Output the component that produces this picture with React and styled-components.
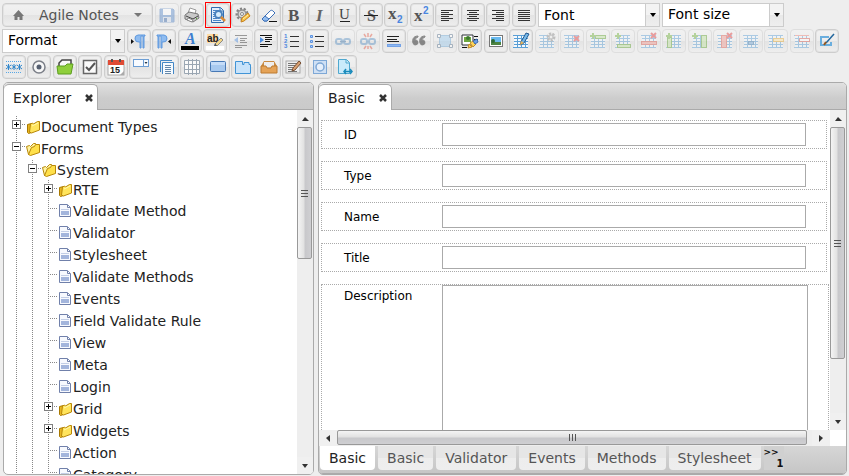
import React from "react";
import styled, { createGlobalStyle, css } from "styled-components";

const Global = createGlobalStyle`
  *, *::before, *::after { box-sizing: border-box; }
  html, body { margin: 0; height: 100%; }
  body {
    background: #eeeeee;
    color: #222222;
    font-family: "DejaVu Sans", Verdana, sans-serif;
    font-size: 14px;
    overflow: hidden;
  }
  button, input, select, textarea { font: inherit; color: inherit; }
  ul { margin: 0; padding: 0; list-style: none; }
`;

/* ---------- layout ---------- */

const Page = styled.div`
  height: 100vh;
  display: flex;
  flex-direction: column;
`;

const Toolbar = styled.header`
  display: flex;
  flex-direction: column;
  gap: 2px;
  padding: 3px 2px;
`;

const ToolRow = styled.div`
  display: flex;
  gap: 2px;
`;

const ToolGroup = styled.div`
  display: flex;
  gap: 1px;
  & > button:nth-child(even) { margin-right: 1px; }
`;

const buttonFace = css`
  border: 1px solid #cdcdcd;
  border-radius: 4px;
  box-shadow: inset 0 0 0 1px #e3e3e3;
  background: linear-gradient(#f1f1f1, #ededed 49%, #e3e3e3 50%, #eeeeee);
`;

const ToolButton = styled.button`
  ${buttonFace}
  position: relative;
  width: 24px;
  height: 24px;
  padding: 0;
  display: grid;
  place-items: center;
  ${(p) => p.$marked && css`
    &::after {
      content: "";
      position: absolute;
      inset: -2px;
      border: 1px solid #ff0000;
    }
  `}
  &:disabled { border-color: #dedede; box-shadow: none; }
  &:disabled svg { opacity: 0.45; }
`;

const MenuButton = styled.button`
  ${buttonFace}
  width: 151px;
  height: 24px;
  padding: 0 10px;
  display: flex;
  align-items: center;
  gap: 14px;
  color: #555555;
  svg:last-child { margin-left: auto; }
`;

const SelectBox = styled.div`
  display: grid;
  grid-template-columns: 1fr 14px;
  width: ${(p) => (p.$wide ? "123px" : "122px")};
  height: 24px;
  border: 1px solid #cccccc;
  background: #ffffff;
`;

const Select = styled.select`
  appearance: none;
  grid-area: 1 / 1 / 2 / 3;
  min-width: 0;
  border: 0;
  outline: 0;
  padding: 0 14px ${(p) => (p.$raised ? "3px" : "0")} 5px;
  background: transparent;
  color: #000000;
`;

const SelectArrow = styled.span`
  grid-area: 1 / 2 / 2 / 3;
  display: grid;
  place-items: center;
  border-left: 1px solid #cccccc;
  background: linear-gradient(#f3f3f3 49%, #e9e9e9 50%, #eeeeee);
  pointer-events: none;
`;

const Workspace = styled.main`
  flex: 1;
  min-height: 0;
  display: grid;
  grid-template-columns: minmax(0, 311fr) minmax(0, 529fr);
  gap: 4px;
  padding: 0 2px 1px 3px;
`;

const Panel = styled.section`
  display: flex;
  flex-direction: column;
  min-height: 0;
  border: 1px solid #aaaaaa;
  border-radius: 5px;
  background: #ffffff;
  overflow: hidden;
`;

const TabBar = styled.div`
  display: flex;
  align-items: flex-end;
  height: 27px;
  flex: none;
  border-bottom: 1px solid #aaaaaa;
  background: linear-gradient(#e0e0e0, #cccccc 60%, #cacaca);
`;

const PanelTab = styled.div`
  display: flex;
  align-items: center;
  gap: 13px;
  height: 26px;
  margin-bottom: -1px;
  padding: 0 4px 0 9px;
  border: 1px solid #aaaaaa;
  border-width: 1px 1px 0 0;
  border-radius: 5px 5px 0 0;
  background: #ffffff;
`;

const CloseButton = styled.button`
  display: grid;
  place-items: center;
  width: 9px;
  height: 16px;
  padding: 0;
  border: 0;
  background: none;
`;

/* ---------- explorer tree ---------- */

const TreeBody = styled.div`
  flex: 1;
  min-height: 0;
  display: flex;
`;

const TreeList = styled.ul`
  flex: 1;
  min-width: 0;
  padding: 6px 0 0 5px;
  overflow: hidden;
`;

const TreeRow = styled.li`
  display: flex;
  height: ${(p) => (p.$compact ? "20px" : "22px")};
  line-height: ${(p) => (p.$compact ? "20px" : "22px")};
  white-space: nowrap;
`;

const Guide = styled.span`
  flex: none;
  width: 16px;
  padding: 4px 0 0 3px;
  background-image: repeating-linear-gradient(#888888 0 1px, transparent 1px 2px)
    ${(p) => (p.$branch ? ", repeating-linear-gradient(90deg, #888888 0 1px, transparent 1px 2px)" : "")};
  background-size: 1px 100%, 9px 1px;
  background-position: 7px 0, 7px 8px;
  background-repeat: no-repeat;
`;

const Toggle = styled.button`
  display: block;
  width: 9px;
  height: 9px;
  padding: 0;
  border: 0;
  svg { display: block; }
`;

const NodeLink = styled.a`
  display: flex;
  align-items: center;
  color: #222222;
  text-decoration: none;
`;

/* ---------- scroll bars ---------- */

const Bar = styled.div`
  display: flex;
  flex-direction: ${(p) => (p.$across ? "row" : "column")};
  flex: none;
  ${(p) => (p.$across ? "height: 16px;" : "width: 16px;")}
  background: #eeeeee;
`;

const BarArrow = styled.button`
  flex: none;
  display: grid;
  place-items: center;
  ${(p) => (p.$across ? "width: 18px; height: 16px;" : "width: 16px; height: 17px;")}
  padding: 0;
  border: 0;
  background: #f0f0f0;
`;

const BarTrack = styled.div`
  flex: 1;
  min-height: 0;
  min-width: 0;
`;

const BarThumb = styled.div`
  display: grid;
  place-items: center;
  border: 1px solid #999999;
  border-radius: 2px;
  ${(p) => p.$across
    ? css`width: ${p.$size}; height: 15px; background: linear-gradient(#f4f4f4, #e2e2e2 45%, #c8c8cb 55%, #cfcfd2);`
    : css`height: ${p.$size}; width: 15px; background: linear-gradient(90deg, #f4f4f4, #e2e2e2 45%, #c8c8cb 55%, #cfcfd2);`}
`;

/* ---------- form ---------- */

const FormArea = styled.div`
  flex: 1;
  min-height: 0;
  display: grid;
  grid-template-columns: minmax(0, 1fr) 16px;
  grid-template-rows: minmax(0, 1fr) 16px;
`;

const Form = styled.form`
  display: flex;
  flex-direction: column;
  gap: 12px;
  padding: 10px 1px 0 2px;
  overflow: hidden;
  font-size: 12px;
  color: #000000;
`;

const Field = styled.div`
  flex: none;
  display: grid;
  grid-template-columns: 120px minmax(0, 1fr);
  border: 1px dotted #aaaaaa;
  ${(p) => p.$tall
    ? css`align-items: start; padding-right: 20px; margin-right: 0;`
    : css`align-items: center; height: 29px; padding-right: 20px; margin-right: 2px;`}
`;

const FieldLabel = styled.label`
  padding-left: 22px;
  line-height: 22px;
`;

const TextInput = styled.input`
  height: 23px;
  min-width: 0;
  border: 1px solid #aaaaaa;
  padding: 0 4px;
  background: #ffffff;
`;

const TextArea = styled.textarea`
  height: 200px;
  min-width: 0;
  border: 1px solid #aaaaaa;
  padding: 4px;
  background: #ffffff;
  resize: none;
`;

const BottomTabs = styled.nav`
  flex: none;
  display: flex;
  gap: 3px;
  height: 28px;
  padding: 0 1px 3px;
  border-bottom: 1px solid #aaaaaa;
  background: linear-gradient(#d6d6d6, #c6c6c6);
  white-space: nowrap;
`;

const BottomTab = styled.button`
  flex: none;
  padding: 0 9px;
  border: 0;
  border-radius: 0 0 4px 4px;
  background: ${(p) => (p.$active ? "#ffffff" : "linear-gradient(#e6e6e6 49%, #ededed 50%, #eeeeee)")};
  color: ${(p) => (p.$active ? "#222222" : "#555555")};
`;

const MoreTabs = styled.button`
  flex: none;
  width: 20px;
  padding: 0;
  border: 0;
  background: #d0d0d0;
  color: #111111;
  font-size: 9px;
  font-weight: bold;
  line-height: 11px;
  text-align: left;
  span { display: block; }
  span:last-child { font-size: 10px; text-align: right; line-height: 12px; }
`;

/* ---------- icons ---------- */

const Drawing = styled.svg`
  overflow: visible;
`;

const Svg = ({ w = 16, h = 16, children }) => (
  <Drawing width={w} height={h} viewBox={`0 0 ${w} ${h}`} fill="none" aria-hidden="true">{children}</Drawing>
);

const Glyph = styled.text`
  font-family: ${(p) => (p.$sans ? '"Liberation Sans", sans-serif' : '"Liberation Serif", serif')};
  font-weight: ${(p) => (p.$plain ? "normal" : "bold")};
  font-style: ${(p) => (p.$slant ? "italic" : "normal")};
  font-size: ${(p) => p.$size}px;
`;

const Lines = ({ list, c = "#333" }) => list.map(([x, y, w], i) => (
  <rect key={i} x={x} y={y} width={w} height="1" fill={c} />
));

const Table = ({ children }) => (
  <>
    <rect x="1" y="3" width="14" height="12" fill="#f4f9fd" />
    <path d="M0 2.500h15M1 5.500h14M1 8.500h14M1 11.500h14M0 14.500h15M4.500 2v13M8.500 2v13M12.500 2v13" stroke="#5a9fd6" />
    {children}
  </>
);
const Plus = ({ x, y }) => <path d={`M${x + 3} ${y}v6M${x} ${y + 3}h6`} stroke="#6fb03a" strokeWidth="2" />;
const Cross = ({ x = 10, y = 1 }) => <path d={`M${x} ${y}l5 5M${x + 5} ${y}l-5 5`} stroke="#e03a3a" strokeWidth="2" />;
const Chain = () => (
  <>
    <rect x="1" y="6" width="6" height="5" rx="2" stroke="#5b92c4" strokeWidth="2" />
    <rect x="9" y="6" width="6" height="5" rx="2" stroke="#5b92c4" strokeWidth="2" />
  </>
);
const pilcrowPath = "M7 2h7v1h-1v12h-1V3h-2v12H9V9H8a3.500 3.500 0 0 1-1-7z";

const icons = {
  save: <><path d="M1 2h13l1 1v12H1z" fill="#5f90d0" stroke="#4f7fc0" /><path d="M4 2h8v6H4z" fill="#ffffff" /><path d="M4 10h8v5H4z" fill="#d5e0f0" /><path d="M5 11h3v4H5z" fill="#3c68a8" /></>,
  print: <><path d="M4 6l2-5 6 2-1 4z" fill="#fff" stroke="#999" /><path d="M1 8l4-3 9 2 1 4-6 4-8-3z" fill="#c9c9c9" stroke="#777" /><path d="M2 9l7 3 5-3" stroke="#444" /><path d="M4 11l5 2-1 2-5-2z" fill="#fff" stroke="#888" /><path d="M12 11h1v1h-1z" fill="#56ad32" /></>,
  preview: <><path d="M1.500.5h9l3 3v12h-12z" fill="#e3effb" stroke="#2f6cb0" /><path d="M10 1v3h3" stroke="#2f6cb0" /><path d="M3 3.500h6M3 5.500h3M3 7.500h2M3 9.500h2M3 11.500h4M3 13.500h8" stroke="#4a86c8" /><circle cx="8.500" cy="7.500" r="3.500" fill="#d5ecfb" stroke="#4a82bd" strokeWidth="2" /><path d="M11 10l4 4" stroke="#d98a35" strokeWidth="2.500" /></>,
  gear: <><circle cx="7" cy="7" r="5" stroke="#858585" strokeWidth="3" strokeDasharray="2 1.500" /><circle cx="7" cy="7" r="4" fill="#d8d8d8" stroke="#929292" strokeWidth="1.500" /><circle cx="7" cy="7" r="1.500" fill="#fff" stroke="#888" /><path d="M6 15l1-4 6-5 2 3-6 5z" fill="#f7c24a" stroke="#c68322" /><path d="M8 12l5-4" stroke="#fff0a4" /></>,
  eraser: <><path d="M1 12l8-8c1-1 2-1 3 0l2 2-8 8H3z" fill="#fff" stroke="#3d70b8" /><path d="M1 12l3-3 4 3-2 2H3z" fill="#92bdf0" stroke="#3d70b8" /><path d="M8 14.500h8" stroke="#111" /></>,
  bold: <Glyph x="2" y="14" $size="17" fill="#555">B</Glyph>,
  italic: <Glyph x="4" y="14" $size="17" $slant fill="#666">I</Glyph>,
  underline: <><Glyph x="2" y="12" $size="15" $plain fill="#444">U</Glyph><path d="M3 14.500h10" stroke="#222" /></>,
  strike: <><Glyph x="4" y="14" $size="16" fill="#555">S</Glyph><path d="M1 8.500h14" stroke="#222" /></>,
  sub: <><Glyph x="0" y="12" $size="17" fill="#555">x</Glyph><Glyph x="9" y="16" $size="10" $sans fill="#4a86e0">2</Glyph></>,
  sup: <><Glyph x="0" y="14" $size="17" fill="#555">x</Glyph><Glyph x="9" y="7" $size="10" $sans fill="#4a86e0">2</Glyph></>,
  left: <Lines list={[[2, 3, 12], [2, 5, 8], [2, 7, 12], [2, 9, 8], [2, 11, 12], [2, 13, 8]]} />,
  center: <Lines list={[[2, 3, 12], [4, 5, 8], [2, 7, 12], [4, 9, 8], [2, 11, 12], [4, 13, 8]]} />,
  right: <Lines list={[[2, 3, 12], [6, 5, 8], [2, 7, 12], [6, 9, 8], [2, 11, 12], [6, 13, 8]]} />,
  justify: <Lines list={[[2, 3, 12], [2, 5, 12], [2, 7, 12], [2, 9, 12], [2, 11, 12], [2, 13, 12]]} />,
  ltr: <><path d="M0 6l3 2.500L0 11z" fill="#111" /><path d={pilcrowPath} fill="#8fbcf0" stroke="#5e98de" /></>,
  rtl: <><path d="M15 6l-3 2.500 3 2.500z" fill="#111" /><path d="M8 2H1v1h1v12h1V3h2v12h1V9h1a3.500 3.500 0 0 0 1-7z" fill="#8fbcf0" stroke="#5e98de" /></>,
  color: <><Glyph x="3" y="11" $size="16" $slant fill="#3d7fd0">A</Glyph><rect x="-1" y="13" width="18" height="4" fill="#000" /></>,
  mark: <><rect x="0" y="1" width="11" height="9" fill="#ffdca4" /><Glyph x="0" y="9" $size="10" $sans fill="#222">ab</Glyph><path d="M8 11l6-6 2 2-6 6z" fill="#f5d787" stroke="#8a8a8a" /><path d="M7 13l1-3 2 3z" fill="#555" /><rect x="-1" y="13" width="18" height="4" fill="#fff" /></>,
  outdent: <><Lines list={[[2, 2, 12], [7, 5, 7], [7, 7, 5], [7, 9, 7], [2, 12, 12], [2, 14, 7]]} c="#333" /><path d="M5 4v6L1 7z" fill="#4d8de0" /></>,
  indent: <><Lines list={[[2, 2, 12], [7, 4, 7], [7, 6, 7], [7, 8, 5], [2, 11, 12], [2, 13, 8]]} c="#111" /><path d="M2 4v6l4-3z" fill="#4d8de0" /></>,
  ol: <><Lines list={[[6, 3, 9], [6, 8, 9], [6, 13, 9]]} /><Glyph x="0" y="5" $size="6" $sans fill="#4d86de">1</Glyph><Glyph x="0" y="10" $size="6" $sans fill="#4d86de">2</Glyph><Glyph x="0" y="15" $size="6" $sans fill="#4d86de">3</Glyph></>,
  ul: <><Lines list={[[6, 3, 9], [6, 8, 9], [6, 13, 9]]} /><path d="M1.500 2.500h2v2h-2zM1.500 7.500h2v2h-2zM1.500 12.500h2v2h-2z" fill="#b5d1fa" stroke="#5b92e0" /></>,
  link: <><Chain /><path d="M5 8.500h6" stroke="#3f74a8" strokeWidth="1.500" /></>,
  unlink: <><Chain /><path d="M8 0v4M4 1l2 3M12 1l-2 3M8 13v3M4 16l2-3M12 16l-2-3" stroke="#e25742" strokeWidth="1.500" /></>,
  rule: <><Lines list={[[1, 3, 12], [1, 6, 10], [1, 8, 12]]} c="#222" /><rect x="1.500" y="11.500" width="13" height="2" fill="#8db8f2" stroke="#74a2e6" /></>,
  quote: <path d="M7 3C2 3 1 7 2 10a2.500 2.500 0 1 0 2-3c0-1 1-2 3-3zM14 3C9 3 8 7 9 10a2.500 2.500 0 1 0 2-3c0-1 1-2 3-3z" fill="#111" stroke="#111" />,
  div: <><rect x="2.500" y="2.500" width="11" height="11" fill="#9dcbee" stroke="#6aa5d4" /><path d="M.5 1.500h3v3h-3zM12.500 1.500h3v3h-3zM.5 11.500h3v3h-3zM12.500 11.500h3v3h-3z" fill="#fff" stroke="#56718c" /></>,
  editImage: <><path d="M0 2h11v10H0z" fill="#fff" stroke="#2e3338" /><path d="M2 4h7v5H2z" fill="#6da83f" /><circle cx="6" cy="5" r="2" fill="#3b7b2d" /><path d="M0 14.500h5M12 3.500h4M12 6.500h4" stroke="#111" /><path d="M6 15l1-4 3 3zM8 10l3-2 3 3-3 3z" fill="#ffd557" stroke="#c38b27" /><path d="M11 8l4-2 1 3-3 2z" fill="#6d9fe8" stroke="#3c6cb0" /></>,
  image: <><rect x="1.500" y="2.500" width="13" height="11" fill="#fff" stroke="#777" /><rect x="3" y="4" width="10" height="8" fill="#69b9ef" /><path d="M3 9h10v3H3z" fill="#4d8442" /><circle cx="5" cy="8" r="2" fill="#2f6937" /></>,
  tableEdit: <><Table /><path d="M8 9l5-9 3 1-5 9-4 2z" fill="#75b8e9" stroke="#245a91" /><path d="M7 12l1-4 3 2z" fill="#e8b35a" /></>,
  tableGear: <Table><circle cx="12" cy="4" r="3" fill="#ddd" stroke="#888" strokeWidth="3" strokeDasharray="2 1" /><circle cx="12" cy="4" r="2" fill="#eee" stroke="#888" /></Table>,
  tableDelete: <Table><Cross y={3} /></Table>,
  rowBefore: <Table><rect x="5.500" y="2.500" width="10" height="3" fill="#bfe29f" stroke="#5ca02c" /><Plus x={0} y={0} /></Table>,
  rowAfter: <Table><rect x="2.500" y="11.500" width="13" height="3" fill="#bfe29f" stroke="#5ca02c" /><Plus x={0} y={0} /></Table>,
  rowDelete: <Table><rect x=".5" y="8.500" width="15" height="3" fill="#f29a92" stroke="#d9574c" /><Cross y={0} /></Table>,
  colBefore: <Table><rect x="1.500" y="4.500" width="4" height="10" fill="#bfe29f" stroke="#5ca02c" /><Plus x={0} y={0} /></Table>,
  colAfter: <Table><rect x="9.500" y="2.500" width="5" height="12" fill="#bfe29f" stroke="#5ca02c" /><Plus x={0} y={0} /></Table>,
  colDelete: <Table><rect x="4.500" y="2.500" width="5" height="12" fill="#f29a92" stroke="#d9574c" /><Cross y={0} /></Table>,
  cell: <Table><rect x="5.500" y="8.500" width="5" height="3" fill="#73a9d8" stroke="#3977ad" /></Table>,
  merge: <Table><rect x="5.500" y="5.500" width="10" height="3" fill="#ffe4a0" stroke="#e5a72c" /></Table>,
  split: <Table><rect x="5.500" y="5.500" width="10" height="3" fill="#fff" stroke="#d9574c" /><path d="M1 2.500h14" stroke="#ee8177" /></Table>,
  pen: <><path d="M10 4H2v8h10V9" stroke="#6aaede" strokeWidth="2" /><path d="M7 10l8-9" stroke="#23679d" strokeWidth="1.500" /><path d="M5 12l2-3" stroke="#93561f" strokeWidth="2" /></>,
  password: <><path d="M0 2.500h16M0 13.500h16" stroke="#58a7e5" strokeDasharray="1 1" /><path d="M2.500 5v6M0 6l5 4M5 6l-5 4M8 5v6M5.500 6l5 4M10.500 6l-5 4M13.500 5v6M11 6l5 4M16 6l-5 4" stroke="#2f86cc" /></>,
  radio: <><circle cx="8" cy="8" r="6" fill="#f7f7f7" stroke="#7b7f88" strokeWidth="1.500" /><circle cx="8" cy="8" r="2.500" fill="#555f70" /></>,
  folder: <><path d="M2 13V4l3-3h9v6" fill="#f8f8f8" stroke="#444" strokeWidth="1.500" /><path d="M0 7h8l2-2h6l-2 10H1z" fill="#8fcf3c" stroke="#5d9e20" /></>,
  check: <><rect x="1.500" y="1.500" width="13" height="13" fill="#fafafa" stroke="#666" strokeWidth="1.500" /><path d="M4 8l3 3 6-7" stroke="#555" strokeWidth="2" /></>,
  date: <><rect x="0" y="2" width="16" height="14" fill="#fff" stroke="#aaa" /><rect x="0" y="1" width="16" height="5" fill="#e04b35" /><path d="M4 0v3M12 0v3" stroke="#555" strokeWidth="2" /><Glyph x="2" y="14" $size="9" $sans fill="#222">15</Glyph><path d="M12 16l4-4v4z" fill="#aaa" /></>,
  combo: <><rect x=".5" y=".5" width="15" height="7" fill="#f8fbff" stroke="#6d9ed4" /><path d="M10.500 1v6" stroke="#6d9ed4" /><path d="M11.500 3h3L13 5z" fill="#234" /></>,
  pages: <><path d="M1.500 13V1.500H13" stroke="#4387c6" /><path d="M3.500 15V3.500H14.500V15" fill="#f5faff" stroke="#4387c6" /><path d="M6 6.500h6M6 8.500h6M6 10.500h6M6 12.500h6M6 14.500h6" stroke="#6387aa" /></>,
  grid: <><rect x="1" y="1" width="14" height="14" fill="#fafafa" /><path d="M.5 1.500h15v13H.5zM0 5.500h16M0 10.500h16M4.500 0v16M8.500 0v16M12.500 0v16" stroke="#9aa6b2" /></>,
  button: <><rect x=".5" y="2.500" width="15" height="10" rx="1" fill="#a8c9ef" stroke="#4879b5" /><path d="M1 4.500h14" stroke="#c5dcf8" strokeWidth="3" /></>,
  tabs: <path d="M.5 14.500v-12h7v3H9v-2h5v2h1.500v9z" fill="#c8e3fa" stroke="#4194d6" />,
  box: <><path d="M3 2h10l3 5H0z" fill="#c98b43" /><path d="M3 3h10v5H3z" fill="#eee" /><path d="M0 7h5l1 2h4l1-2h5v7H0z" fill="#e5a357" stroke="#bd7b31" /></>,
  note: <><rect x="0" y="2" width="14" height="12" fill="#eee" stroke="#aaa" /><path d="M2 4.500h10M2 6.500h8M2 8.500h6M2 10.500h5M2 12.500h9" stroke="#777" /><path d="M6 12l1-3 6-7 2 2-6 7z" fill="#d8a071" stroke="#795033" /></>,
  embed: <><rect x="1.500" y="1.500" width="13" height="13" fill="#cfe0f4" stroke="#7ea8d6" /><circle cx="8" cy="8" r="4" fill="#e7f0fb" stroke="#7ea8d6" strokeWidth="1.500" /></>,
  code: <><path d="M1.500.5h8l3 3v11h-11z" fill="#c9ebfb" stroke="#4fa8cf" /><path d="M9 1v3h3" stroke="#4fa8cf" /><path d="M9 10l-2 2.500L9 15M13 10l2 2.500L13 15M8 12.500h6" stroke="#188abb" strokeWidth="1.500" /></>,
};

const HomeIcon = () => <Svg w={12} h={12}><path d="M0 7l5.500-6L11 7H9.500v4h-3V8h-2v3h-3V7z" fill="#777" /></Svg>;
const DownIcon = ({ w = 8, c = "#777" }) => <Svg w={w} h={5}><path d={`M0 0h${w}L${w / 2} 4z`} fill={c} /></Svg>;
const CloseIcon = () => <Svg w={8} h={8}><path d="M1 1l6 6M7 1L1 7" stroke="#333" strokeWidth="2.500" /></Svg>;

const arrowPaths = { up: "M1 6l3-4 4 4z", down: "M1 2h6L4 6z", left: "M6 1v7L2 4z", right: "M2 1v7l4-4z" };
const ArrowIcon = ({ to }) => <Svg w={8} h={8}><path d={arrowPaths[to]} fill="#333" /></Svg>;
const Grip = ({ across }) => (
  <Svg w={8} h={8}><path d={across ? "M1.500 0v7M4.500 0v7M7.500 0v7" : "M0 1.500h7M0 4.500h7M0 7.500h7"} stroke="#555" /></Svg>
);

const PlusMinus = ({ open }) => (
  <Svg w={9} h={9}>
    <rect x=".5" y=".5" width="8" height="8" fill="#fff" stroke="#808080" />
    <path d={open ? "M2 4.500h5" : "M2 4.500h5M4.500 2v5"} stroke="#000" />
  </Svg>
);

const nodeIcons = {
  closed: <><path d="M2.500 5.500l4-1v9l-3 1-1-1z" fill="#e8b520" stroke="#a87800" /><path d="M5.500 5l2-1 1 1 4-2.500h2v8.500l-8 3-2-1z" fill="#ffe45c" stroke="#b88708" /><path d="M7 7l6-3" stroke="#fff9b0" /></>,
  open: <><path d="M3.500 13.500l-2-8 3-1 1 1 3-3h2l1 1v7z" fill="#fff3a0" stroke="#b88708" /><path d="M3.500 13.500l3-7 3-1 1-2h4v8l-9 3z" fill="#ffe04a" stroke="#b88708" /></>,
  file: <><path d="M2.500 1.500h8l3 3v9h-11z" fill="#f7f9fe" stroke="#7080aa" /><path d="M10.500 2v2.500H13" fill="#fff" stroke="#7080aa" /><path d="M4 6.500h8" stroke="#c3cee6" /><rect x="4" y="8" width="8" height="4" fill="#a3b5dc" /></>,
};

/* ---------- data ---------- */

const rowOne = ["save", "print", "preview", "gear", "eraser", "bold", "italic", "underline", "strike", "sub", "sup", "left", "center", "right", "justify"];
const rowTwo = ["ltr", "rtl", "color", "mark", "outdent", "indent", "ol", "ul", "link", "unlink", "rule", "quote", "div", "editImage", "image", "tableEdit",
  "tableGear", "tableDelete", "rowBefore", "rowAfter", "rowDelete", "colBefore", "colAfter", "colDelete", "cell", "merge", "split", "pen"];
const rowThree = ["password", "radio", "folder", "check", "date", "combo", "pages", "grid", "button", "tabs", "box", "note", "embed", "code"];
const inactive = new Set(["save", "outdent", "link", "unlink", "quote", "div", "tableGear", "tableDelete", "rowBefore", "rowAfter", "rowDelete", "colBefore", "colAfter", "colDelete", "cell", "merge", "split"]);

const nodes = [
  ["Document Types", 0, "closed"], ["Forms", 0, "open"], ["System", 1, "open", true], ["RTE", 2, "closed", true],
  ["Validate Method", 2, "file"], ["Validator", 2, "file"], ["Stylesheet", 2, "file"], ["Validate Methods", 2, "file"],
  ["Events", 2, "file"], ["Field Validate Rule", 2, "file"], ["View", 2, "file"], ["Meta", 2, "file"], ["Login", 2, "file"],
  ["Grid", 2, "closed"], ["Widgets", 2, "closed"], ["Action", 2, "file"], ["Category", 2, "file"],
];

const bottomTabs = ["Basic", "Basic", "Validator", "Events", "Methods", "Stylesheet"];

/* ---------- parts ---------- */

const Tools = ({ names }) => (
  <ToolGroup>
    {names.map((n) => (
      <ToolButton key={n} type="button" aria-label={n} disabled={inactive.has(n)} $marked={n === "preview"}>
        <Svg>{icons[n]}</Svg>
      </ToolButton>
    ))}
  </ToolGroup>
);

const Dropdown = ({ name, raised, wide }) => (
  <SelectBox $wide={wide}>
    <Select aria-label={name} $raised={raised}><option>{name}</option></Select>
    <SelectArrow><DownIcon w={6} c="#000" /></SelectArrow>
  </SelectBox>
);

const ScrollBar = ({ across, size }) => (
  <Bar $across={across}>
    <BarArrow type="button" $across={across} aria-label="Scroll back"><ArrowIcon to={across ? "left" : "up"} /></BarArrow>
    <BarTrack><BarThumb $across={across} $size={size}><Grip across={across} /></BarThumb></BarTrack>
    <BarArrow type="button" $across={across} aria-label="Scroll forward"><ArrowIcon to={across ? "right" : "down"} /></BarArrow>
  </Bar>
);

const PanelHeader = ({ title }) => (
  <TabBar>
    <PanelTab>{title}<CloseButton type="button" aria-label={`Close ${title}`}><CloseIcon /></CloseButton></PanelTab>
  </TabBar>
);

const TreeNode = ({ node: [name, depth, kind, compact] }) => (
  <TreeRow $compact={compact}>
    {Array.from({ length: depth }, (_, i) => <Guide key={i} />)}
    <Guide $branch>
      {kind !== "file" && <Toggle type="button" aria-label={`Toggle ${name}`}><PlusMinus open={kind === "open"} /></Toggle>}
    </Guide>
    <NodeLink href="#"><Svg>{nodeIcons[kind]}</Svg>{name}</NodeLink>
  </TreeRow>
);

export default function App() {
  return (
    <Page>
      <Global />
      <Toolbar>
        <ToolRow>
          <MenuButton type="button"><HomeIcon />Agile Notes<DownIcon /></MenuButton>
          <Tools names={rowOne} />
          <Dropdown name="Font" />
          <Dropdown name="Font size" raised />
        </ToolRow>
        <ToolRow>
          <Dropdown name="Format" raised wide />
          <Tools names={rowTwo} />
        </ToolRow>
        <ToolRow><Tools names={rowThree} /></ToolRow>
      </Toolbar>
      <Workspace>
        <Panel>
          <PanelHeader title="Explorer" />
          <TreeBody>
            <TreeList>{nodes.map((n) => <TreeNode key={n[0]} node={n} />)}</TreeList>
            <ScrollBar size="40%" />
          </TreeBody>
        </Panel>
        <Panel>
          <PanelHeader title="Basic" />
          <FormArea>
            <Form>
              {["ID", "Type", "Name", "Title"].map((l) => (
                <Field key={l}>
                  <FieldLabel htmlFor={l}>{l}</FieldLabel>
                  <TextInput id={l} type="text" />
                </Field>
              ))}
              <Field $tall>
                <FieldLabel htmlFor="description">Description</FieldLabel>
                <TextArea id="description" />
              </Field>
            </Form>
            <ScrollBar size="81%" />
            <ScrollBar across size="99%" />
          </FormArea>
          <BottomTabs>
            {bottomTabs.map((t, i) => <BottomTab key={i} type="button" $active={i === 0}>{t}</BottomTab>)}
            <MoreTabs type="button" aria-label="More tabs"><span>&gt;&gt;</span><span>1</span></MoreTabs>
          </BottomTabs>
        </Panel>
      </Workspace>
    </Page>
  );
}
